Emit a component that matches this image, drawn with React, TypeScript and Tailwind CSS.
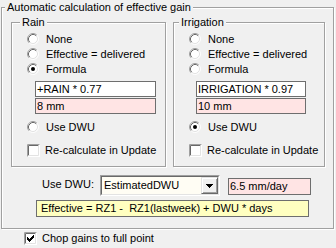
import React from 'react';

const etched = "border border-[#a0a0a0] shadow-[inset_1px_1px_0_#fff,1px_1px_0_#fff]";

function Radio({ checked, label }: { checked?: boolean; label: string }) {
  return (
    <div className="flex items-center h-[15px]">
      <svg width="13" height="13" viewBox="0 0 13 13" className="shrink-0">
        <circle cx="6" cy="6" r="5" fill="#fff" />
        <path d="M2.11 9.89 A5.5 5.5 0 0 1 9.89 2.11" fill="none" stroke="#a0a0a0" />
        <path d="M9.89 2.11 A5.5 5.5 0 0 1 2.11 9.89" fill="none" stroke="#fff" />
        <path d="M2.82 9.18 A4.5 4.5 0 0 1 9.18 2.82" fill="none" stroke="#696969" />
        <path d="M9.18 2.82 A4.5 4.5 0 0 1 2.82 9.18" fill="none" stroke="#e3e3e3" />
        {checked && <circle cx="6" cy="6" r="2" fill="#000" />}
      </svg>
      <span className="ml-[6px]">{label}</span>
    </div>
  );
}

function Check({ checked, label }: { checked?: boolean; label: string }) {
  const cols = [2, 3, 4, 3, 2, 1, 0];
  return (
    <div className="flex items-center h-[15px]">
      <svg width="13" height="13" viewBox="0 0 13 13" className="shrink-0">
        <rect x="0" y="0" width="13" height="13" fill="#fff" />
        <path d="M0.5 12.5V0.5H12.5" fill="none" stroke="#a0a0a0" />
        <path d="M1.5 11.5V1.5H11.5" fill="none" stroke="#696969" />
        <path d="M1.5 11.5H11.5V1.5" fill="none" stroke="#e3e3e3" />
        {checked &&
          cols.map((s, c) => <rect key={c} x={3 + c} y={3 + s} width="1" height="3" fill="#000" />)}
      </svg>
      <span className="ml-[5px]">{label}</span>
    </div>
  );
}

function Edit({ text, className }: { text: string; className: string }) {
  return (
    <div className={`h-[16px] border border-[#6e6e6e] pl-[1px] leading-[14px] whitespace-nowrap overflow-hidden ${className}`}>
      {text}
    </div>
  );
}

function Group({ title, legendMl, width, children }: { title: string; legendMl: string; width: string; children: React.ReactNode }) {
  return (
    <fieldset className={`${etched} ${width} h-[151px] min-w-0 shrink-0`}>
      <legend className={`${legendMl} px-[2px] leading-[13px] bg-[#f0f0f0]`}>{title}</legend>
      <div className="flex flex-col pl-[15px] pt-[3px]">{children}</div>
    </fieldset>
  );
}

export default function App() {
  return (
    <div className="w-[336px] h-[248px] bg-[#f0f0f0] pt-[1px] pl-[1px] text-[11px] text-black font-['Liberation_Sans',Arial,sans-serif] overflow-hidden">
      <fieldset className={`${etched} w-[333px] h-[228px] min-w-0`}>
        <legend className="ml-[3px] px-[2px] leading-[13px] bg-[#f0f0f0]">Automatic calculation of effective gain</legend>

        <div className="flex gap-[7px] pl-[9px] mt-[2px]">
          <Group title="Rain" legendMl="ml-[8px]" width="w-[155px]">
            <Radio label="None" />
            <Radio label="Effective = delivered" />
            <Radio label="Formula" checked />
            <div className="flex flex-col gap-[1px] ml-[8px] mt-[4px]">
              <Edit text="+RAIN * 0.77" className="w-[121px] bg-white" />
              <Edit text="8 mm" className="w-[121px] bg-[#ffe4e4]" />
            </div>
            <div className="mt-[6px]">
              <Radio label="Use DWU" />
            </div>
            <div className="mt-[8px]">
              <Check label="Re-calculate in Update" />
            </div>
          </Group>

          <Group title="Irrigation" legendMl="ml-[5px]" width="w-[152px]">
            <Radio label="None" />
            <Radio label="Effective = delivered" />
            <Radio label="Formula" />
            <div className="flex flex-col gap-[1px] ml-[7px] mt-[4px]">
              <Edit text="IRRIGATION * 0.97" className="w-[110px] bg-white" />
              <Edit text="10 mm" className="w-[110px] bg-[#ffe4e4]" />
            </div>
            <div className="mt-[6px]">
              <Radio label="Use DWU" checked />
            </div>
            <div className="mt-[8px]">
              <Check label="Re-calculate in Update" />
            </div>
          </Group>
        </div>

        <div className="flex items-start mt-[8px] pl-[40px]">
          <span className="w-[58px] mt-[3px] leading-[13px]">Use DWU:</span>
          <div className="w-[120px] h-[21px] border border-t-[#a0a0a0] border-l-[#a0a0a0] border-b-white border-r-white">
            <div className="h-full flex border border-t-[#696969] border-l-[#696969] border-b-[#e3e3e3] border-r-[#e3e3e3] bg-[#fffdf4]">
              <span className="flex-1 pl-[2px] leading-[17px] whitespace-nowrap overflow-hidden">EstimatedDWU</span>
              <div className="w-[17px] h-full flex items-center justify-center border border-t-[#e3e3e3] border-l-[#e3e3e3] border-b-[#696969] border-r-[#696969] bg-[#f0f0f0] shadow-[inset_1px_1px_0_#fff,inset_-1px_-1px_0_#a0a0a0]">
                <svg width="7" height="4" viewBox="0 0 7 4">
                  <path d="M0 0h7v1h-1v1h-1v1h-1v1h-1v-1h-1v-1h-1v-1h-1z" fill="#000" />
                </svg>
              </div>
            </div>
          </div>
          <Edit text="6.5 mm/day" className="w-[83px] h-[17px] ml-[8px] mt-[3px] bg-[#ffe4e4] leading-[15px]" />
        </div>

        <div className="ml-[34px] mt-[4px] w-[273px] h-[17px] border border-[#6e6e6e] bg-[#ffffc0] pl-[4px] leading-[15px] whitespace-nowrap">
          Effective = RZ1 - &nbsp;RZ1(lastweek) + DWU * days
        </div>
      </fieldset>

      <div className="pl-[23px] mt-[2px]">
        <Check label="Chop gains to full point" checked />
      </div>
    </div>
  );
}
